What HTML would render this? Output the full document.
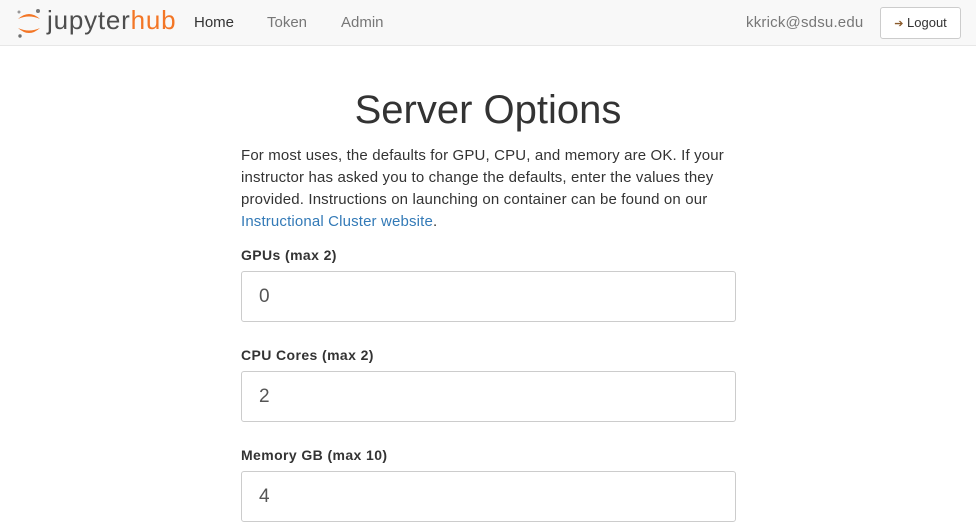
<!DOCTYPE html>
<html><head><meta charset="utf-8"><style>
body{margin:0;width:976px;height:532px;overflow:hidden;background:#fff;font-family:"Liberation Sans",Arial,sans-serif;color:#333;font-size:14px}
.nav{position:absolute;left:0;top:0;width:976px;height:45px;background:#f8f8f8;border-bottom:1px solid #e7e7e7}
.nav a{position:absolute;top:14px;font-size:15px;color:#777;text-decoration:none}
.logo{position:absolute;left:15px;top:7px}
.btn{position:absolute;left:880px;top:7px;width:81px;height:32px;border:1px solid #ccc;border-radius:3px;background:#fff;box-sizing:border-box;font-size:13px;color:#333;line-height:30px;text-align:center}
h1{position:absolute;left:0;width:976px;top:88px;margin:0;text-align:center;font-weight:400;font-size:40px;color:#333}
.p{position:absolute;left:241px;top:145px;width:510px;font-size:15px;letter-spacing:0.15px;line-height:22px;color:#333}
.p a{color:#337ab7;text-decoration:none}
label{position:absolute;left:241px;font-weight:bold;font-size:14px;letter-spacing:0.4px}
.in{position:absolute;left:241px;width:495px;height:51px;border:1px solid #ccc;border-radius:3px;box-sizing:border-box;font-size:19px;padding-left:17px;line-height:49px;color:#555}
</style></head><body>
<div class="nav">
<svg class="logo" width="28" height="32" viewBox="0 0 28 32"><path d="M3 12 Q14 2 25 12 Q14 7 3 12Z" fill="#f37626"/><path d="M3 21 Q14 31 25 21 Q14 26 3 21Z" fill="#f37626"/><circle cx="23" cy="4" r="2" fill="#767677"/><circle cx="4" cy="5" r="1.5" fill="#989798"/><circle cx="5" cy="29" r="1.7" fill="#6f7070"/></svg>
<span style="position:absolute;left:47px;top:5px;font-size:26px;color:#4e4e4e;letter-spacing:0.8px">jupyter<span style="color:#f37626">hub</span></span>
<a style="left:194px;color:#333">Home</a><a style="left:267px">Token</a><a style="left:341px">Admin</a>
<a style="left:746px;top:14px;letter-spacing:0.2px">kkrick@sdsu.edu</a>
<div class="btn"><span style="color:#8a5a2b;font-size:11px">&#x2794;</span> Logout</div>
</div>
<h1>Server Options</h1>
<div class="p">For most uses, the defaults for GPU, CPU, and memory are OK. If your instructor has asked you to change the defaults, enter the values they provided. Instructions on launching on container can be found on our <a>Instructional Cluster website</a>.</div>
<label style="top:247px">GPUs (max 2)</label><div class="in" style="top:271px">0</div>
<label style="top:347px">CPU Cores (max 2)</label><div class="in" style="top:371px">2</div>
<label style="top:447px">Memory GB (max 10)</label><div class="in" style="top:471px">4</div>
</body></html>
